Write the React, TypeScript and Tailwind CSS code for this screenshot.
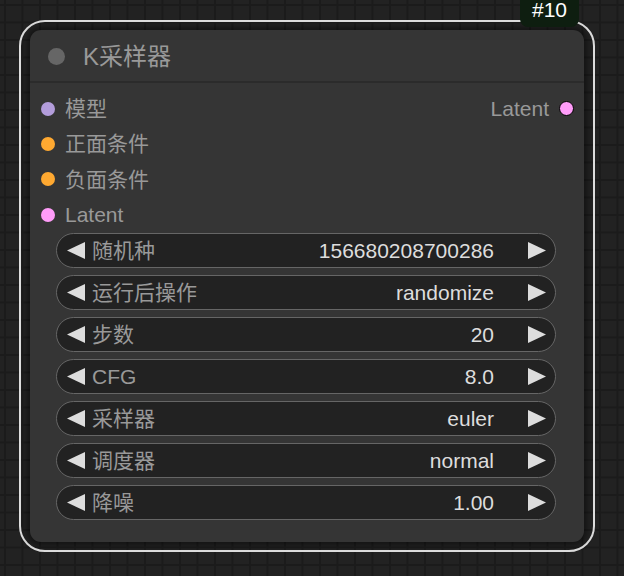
import React from 'react';

const FONT = { fontFamily: '"Liberation Sans", "Noto Sans CJK SC", sans-serif' };

interface Slot {
  label: string;
  color: string;
}

interface Widget {
  label: string;
  value: string;
}

const inputs: Slot[] = [
  { label: '模型', color: '#b39ddb' },
  { label: '正面条件', color: '#ffa931' },
  { label: '负面条件', color: '#ffa931' },
  { label: 'Latent', color: '#ff9cf9' },
];

const widgets: Widget[] = [
  { label: '随机种', value: '156680208700286' },
  { label: '运行后操作', value: 'randomize' },
  { label: '步数', value: '20' },
  { label: 'CFG', value: '8.0' },
  { label: '采样器', value: 'euler' },
  { label: '调度器', value: 'normal' },
  { label: '降噪', value: '1.00' },
];

const Arrow: React.FC<{ dir: 'left' | 'right' }> = ({ dir }) => (
  <svg width="18" height="17" viewBox="0 0 18 17" className="shrink-0">
    {dir === 'left' ? (
      <polygon points="18,0 18,17 0,8.5" fill="#dddddd" />
    ) : (
      <polygon points="0,0 0,17 18,8.5" fill="#dddddd" />
    )}
  </svg>
);

const WidgetRow: React.FC<{ w: Widget }> = ({ w }) => (
  <div className="flex h-[35px] w-[500px] items-center rounded-full border-[1.5px] border-[#666] bg-[#222] pl-[10px] pr-[9px]">
    <Arrow dir="left" />
    <span className="ml-[7px] text-[21px] leading-none text-[#999]">{w.label}</span>
    <span className="ml-auto mr-[34px] text-[21px] leading-none text-[#ddd]">{w.value}</span>
    <Arrow dir="right" />
  </div>
);

export default function App() {
  return (
    <div
      style={FONT}
      className="relative h-[576px] w-[624px] overflow-hidden bg-[#222] bg-[linear-gradient(#1b1b1b_2px,transparent_2px),linear-gradient(90deg,#1b1b1b_2px,transparent_2px)] bg-[size:17.5px_17.5px] bg-[position:4px_4px]"
    >
      {/* selection outline */}
      <div className="absolute left-[19px] top-[20px] h-[532px] w-[576px] rounded-[26px] border-2 border-[#dedede]" />

      {/* node */}
      <div className="absolute left-[30px] top-[30px] flex h-[512px] w-[554px] flex-col rounded-[11px] bg-[#353535] shadow-[0_0_6px_3px_rgba(0,0,0,0.45)]">
        <div className="flex h-[53px] items-center gap-[18px] border-b-2 border-[#2b2b2b] pl-[18px] pt-[2px]">
          <div className="h-[17px] w-[17px] rounded-full bg-[#666]" />
          <span className="text-[24px] leading-none text-[#999]">K采样器</span>
        </div>

        <div className="flex flex-col pt-[8px]">
          {inputs.map((s, i) => (
            <div key={s.label} className="flex h-[35.3px] items-center">
              <div className="ml-[11px] h-[14px] w-[14px] rounded-full" style={{ backgroundColor: s.color }} />
              <span className="ml-[10px] text-[21px] leading-none text-[#999]">{s.label}</span>
              {i === 0 && (
                <>
                  <span className="ml-auto text-[21px] leading-none text-[#999]">Latent</span>
                  <div className="ml-[10px] mr-[10px] h-[15px] w-[15px] rounded-full border-[1.5px] border-black bg-[#ff9cf9]" />
                </>
              )}
            </div>
          ))}
        </div>

        <div className="ml-[26px] mt-px flex flex-col gap-[7px]">
          {widgets.map((w) => (
            <WidgetRow key={w.label} w={w} />
          ))}
        </div>
      </div>

      {/* id badge */}
      <div className="absolute left-[520px] top-0 flex h-[27px] w-[59px] items-start justify-center rounded-b-[8px] bg-[#0e1e10]">
        <span className="mt-[-1px] text-[21px] leading-[21px] text-white">#10</span>
      </div>
    </div>
  );
}
